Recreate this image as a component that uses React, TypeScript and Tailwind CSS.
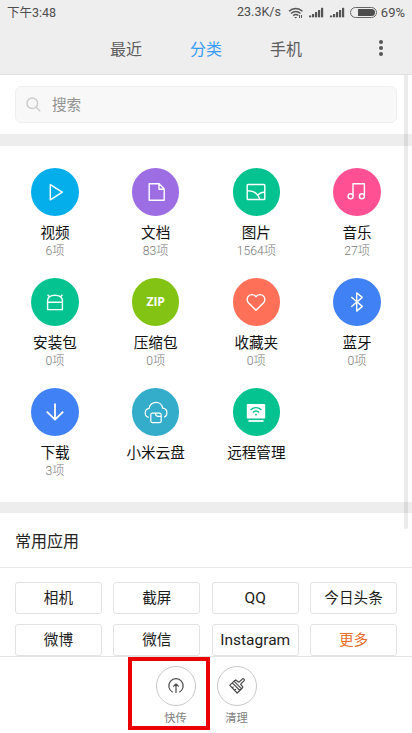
import type { ReactNode } from "react";

type Category = {
  name: string;
  count?: string;
  color: string;
  icon: ReactNode;
};

const categories: Category[] = [
  {
    name: "视频",
    count: "6项",
    color: "bg-[#03aeea]",
    icon: <path d="M19.3 16.6v15.2L31.3 24.2z" />,
  },
  {
    name: "文档",
    count: "83项",
    color: "bg-[#9d6de3]",
    icon: <path d="M17.2 15.8h10l5 5.2v11.2h-15zM27 15.8v5.4h5.2" />,
  },
  {
    name: "图片",
    count: "1564项",
    color: "bg-[#05c391]",
    icon: (
      <>
        <rect x="15.2" y="16.5" width="17.6" height="15" rx="0.8" />
        <path d="M15.2 23c6.5-.6 10.8 2.5 12.5 8.5M25.8 27.5c1.4-2.4 3.8-3.5 7-3.3" />
      </>
    ),
  },
  {
    name: "音乐",
    count: "27项",
    color: "bg-[#ff5093]",
    icon: (
      <>
        <path d="M20 28V15.8h11.4V28" />
        <circle cx="17.6" cy="28.2" r="2.5" />
        <circle cx="28.9" cy="28.2" r="2.5" />
      </>
    ),
  },
  {
    name: "安装包",
    count: "0项",
    color: "bg-[#05c391]",
    icon: (
      <path d="M16.6 31.6v-9c0-3.3 3-5.4 7.4-5.4s7.4 2.1 7.4 5.4v9zM16.6 24.2h14.8M16.6 16.8l2 2.3M31.4 16.8l-2 2.3" />
    ),
  },
  {
    name: "压缩包",
    count: "0项",
    color: "bg-[#82c313]",
    icon: null,
  },
  {
    name: "收藏夹",
    count: "0项",
    color: "bg-[#ff7059]",
    icon: (
      <path d="M24 32.3l-7.4-7.4a4.8 4.8 0 0 1 0-6.9 4.7 4.7 0 0 1 6.7 0l.7.8.7-.8a4.7 4.7 0 0 1 6.7 0 4.8 4.8 0 0 1 0 6.9z" />
    ),
  },
  {
    name: "蓝牙",
    count: "0项",
    color: "bg-[#4081f6]",
    icon: <path d="M18.3 19l11 9.4-5.6 4.7V14.9l5.6 4.5-11 9.4" />,
  },
  {
    name: "下载",
    count: "3项",
    color: "bg-[#4081f6]",
    icon: <path strokeWidth="1.8" d="M24 15.5v16.2M15.8 23.7l8.2 8 8.2-8" />,
  },
  {
    name: "小米云盘",
    color: "bg-[#34adcb]",
    icon: (
      <g strokeWidth="1.2">
        <path d="M16.7 29.3c-2.1-.5-3.5-2.2-3.5-4.4 0-2.4 1.7-4.3 4-4.6.3-3.4 3.2-6 6.7-6s6.3 2.5 6.7 5.9c2.5.2 4.3 2.2 4.3 4.7 0 1.9-1 3.5-2.7 4.2" />
        <rect x="18.8" y="25.2" width="10.4" height="9.4" rx="1.6" />
        <path d="M23.5 25.2c0 2.2.8 3.2 2.6 3.2h3.1" />
      </g>
    ),
  },
  {
    name: "远程管理",
    color: "bg-[#05c391]",
    icon: (
      <>
        <rect x="14.8" y="16" width="18.4" height="14.6" rx="0.8" fill="#fff" stroke="none" />
        <path d="M16.5 33h15" strokeWidth="1.8" />
        <g stroke="#05c391" strokeWidth="1.4">
          <path d="M18.5 22c3.3-3 7.7-3 11 0M20.8 24.5c2-1.8 4.4-1.8 6.4 0" />
          <circle cx="24" cy="26.7" r="0.9" fill="#05c391" stroke="none" />
        </g>
      </>
    ),
  },
];

const apps = ["相机", "截屏", "QQ", "今日头条", "微博", "微信", "Instagram", "更多"];

function Signal() {
  return (
    <svg className="h-[11px] w-[15px]" viewBox="0 0 15 11" fill="#555">
      <rect x="0" y="8.5" width="2.2" height="1.8" />
      <rect x="3" y="7" width="2.2" height="3.3" />
      <rect x="6" y="5" width="2.2" height="5.3" />
      <rect x="9" y="3" width="2.2" height="7.3" />
      <rect x="12" y="0.8" width="2.2" height="9.5" />
    </svg>
  );
}

function StatusBar() {
  return (
    <div className="flex h-[25px] items-center justify-between px-[7px] text-[12.5px] text-[#4d4d4d]">
      <span className="pt-px">下午3:48</span>
      <div className="flex items-center">
        <span>23.3K/s</span>
        <svg className="ml-[7px] h-3 w-4" viewBox="0 0 16 12" fill="none" stroke="#555" strokeWidth="1.4">
          <path d="M1 4.2c4-3.7 9.5-3.7 13.5 0M3 6.5c3-2.6 6.6-2.6 9.5 0M5.2 8.6c1.7-1.4 3.6-1.4 5.1 0" />
          <path d="M6.2 10l1.5 1.6L9.2 10z" fill="#555" stroke="none" />
          <path d="M11.5 11V8M13.5 8v3" strokeWidth="1" />
        </svg>
        <span className="ml-[5px] flex gap-[6px]">
          <Signal />
          <Signal />
        </span>
        <span className="ml-[5px] flex h-[11px] w-[27px] justify-end rounded-full border border-[#666] p-px">
          <span className="w-[17px] rounded-r-full bg-[#4d4d4d]" />
        </span>
        <span className="ml-[4px] text-[13px]">69%</span>
      </div>
    </div>
  );
}

function Tabs() {
  return (
    <div className="relative flex h-[49px] items-center justify-center gap-12 pt-px text-base text-[#5c5c5c]">
      <span>最近</span>
      <span className="text-[#389cf2]">分类</span>
      <span>手机</span>
      <span className="absolute top-[15px] right-[29px] flex flex-col gap-[2px]">
        <i className="size-1 rounded-full bg-[#555]" />
        <i className="size-1 rounded-full bg-[#555]" />
        <i className="size-1 rounded-full bg-[#555]" />
      </span>
    </div>
  );
}

function CategoryItem({ item }: { item: Category }) {
  return (
    <div className="flex h-[110px] flex-col items-center">
      <div className={`flex size-[47.5px] items-center justify-center rounded-full ${item.color}`}>
        {item.icon ? (
          <svg
            className="size-12 shrink-0"
            viewBox="0 0 48 48"
            fill="none"
            stroke="#fff"
            strokeWidth="1.4"
            strokeLinejoin="round"
          >
            {item.icon}
          </svg>
        ) : (
          <span className="font-['Open_Sans'] text-[12px] font-bold text-white">ZIP</span>
        )}
      </div>
      <span className="mt-[7.5px] text-[14.6px] leading-5 text-[#111]">{item.name}</span>
      {item.count && <span className="text-[12.2px] leading-4 font-light text-[#777]">{item.count}</span>}
    </div>
  );
}

function RoundButton({ label, children }: { label: string; children: ReactNode }) {
  return (
    <div className="flex w-10 flex-col items-center">
      <span className="flex size-10 items-center justify-center rounded-full border border-[#c8c8c8]">
        <svg
          className="size-5"
          viewBox="0 0 20 20"
          fill="none"
          stroke="#484848"
          strokeWidth="1.2"
          strokeLinejoin="round"
        >
          {children}
        </svg>
      </span>
      <span className="mt-[5px] text-[11.3px] leading-4 text-[#808080]">{label}</span>
    </div>
  );
}

export default function App() {
  return (
    <div className="relative flex h-[733px] w-[412px] flex-col overflow-hidden bg-white font-['Roboto','Noto_Sans_CJK_SC',sans-serif]">
      <header className="h-[75px] shrink-0 border-b border-[#dfdfdf] bg-[#eeeeee]">
        <StatusBar />
        <Tabs />
      </header>

      {/* Search */}
      <div className="h-[59px] shrink-0 px-[15px] pt-[11px]">
        <div className="flex h-[37px] items-center rounded-md border border-[#efefef] bg-[#f8f8f8] pl-[10px] text-[14.6px] text-[#929292]">
          <svg className="mr-[11px] size-[15px]" viewBox="0 0 15 15" fill="none" stroke="#ccc" strokeWidth="1.5">
            <circle cx="6.3" cy="6.3" r="5.3" />
            <path d="M10.2 10.2l4 4" />
          </svg>
          <span className="pt-[2px]">搜索</span>
        </div>
      </div>
      <div className="h-3 shrink-0 bg-[#ededed]" />

      {/* Categories */}
      <div className="grid h-[356px] shrink-0 grid-cols-4 content-start px-[4.7px] pt-[22px]">
        {categories.map((item) => (
          <CategoryItem key={item.name} item={item} />
        ))}
      </div>
      <div className="h-[11px] shrink-0 bg-[#ededed]" />

      {/* Frequent apps */}
      <div className="flex h-[55px] shrink-0 items-center border-b border-[#e9e9e9] pt-[3px] pl-[15px] text-base text-[#222]">
        常用应用
      </div>
      <div className="grid h-[88px] shrink-0 grid-cols-4 content-start gap-x-[11.5px] gap-y-[10px] px-[15px] pt-[14px]">
        {apps.map((app) => (
          <span
            key={app}
            className={`flex h-8 items-center justify-center rounded-[3px] border border-[#e3e3e3] pt-[2px] ${
              app === "更多" ? "text-[#e8702e]" : "text-[#1c1c1c]"
            } ${/^[A-Z]/.test(app) ? "text-[15.5px]" : "text-[14.6px]"}`}
          >
            {app}
          </span>
        ))}
      </div>

      {/* Bottom bar */}
      <footer className="flex grow justify-center gap-[21px] border-t border-[#e3e3e3] pt-[9px]">
        <RoundButton label="快传">
          <path d="M6.6 16.2a7.2 7.2 0 1 1 6.8 0M10 17V7.8M7.2 10.6L10 7.8l2.8 2.8" />
        </RoundButton>
        <RoundButton label="清理">
          <path d="M2.8 9.4L7 5.2l7.6 7.6-4.4 4.2zM5.3 6.9l7.6 7.6M7 5.2l1.8-1.3 3 2.3 3.5-3.1a1.2 1.2 0 0 1 1.7 1.7L13.6 8.2l2.3 2.9-1.3 1.7M5.3 11.8l1.2-1.2M7.8 14.3L9 13.1" />
        </RoundButton>
      </footer>

      {/* Highlight around the transfer button */}
      <div className="absolute top-[657px] left-[128px] h-[73px] w-[82px] border-4 border-[#ea0000]" />

      {/* Scrollbar */}
      <div className="absolute top-[75px] right-1 h-[454px] w-1 rounded-b-full bg-black/8" />
    </div>
  );
}
